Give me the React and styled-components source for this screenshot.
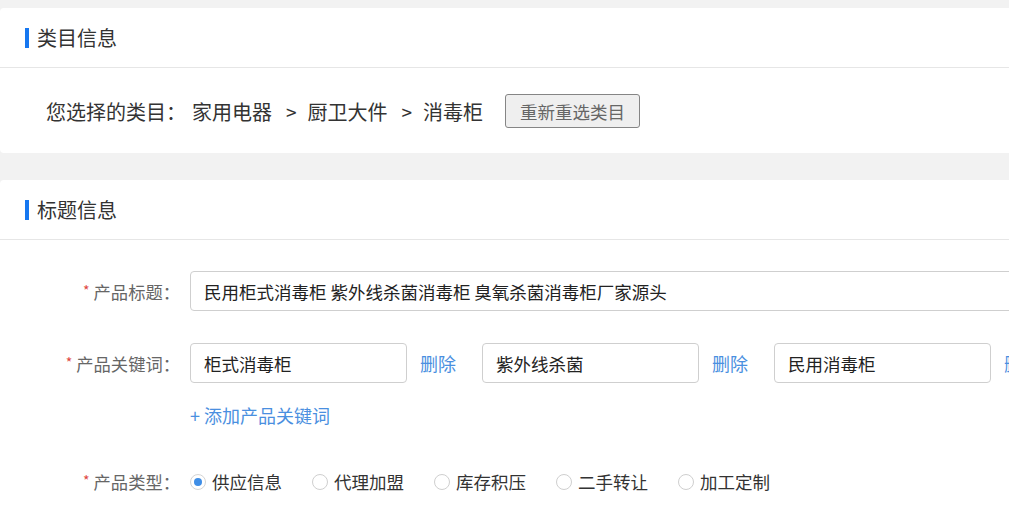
import React, { useState } from "react";
import styled, { createGlobalStyle } from "styled-components";

const GlobalStyle = createGlobalStyle`
  html, body {
    margin: 0;
    padding: 0;
    background: #f2f2f2;
    overflow: hidden;
  }
  body {
    font-family: "Noto Sans CJK SC", "Noto Sans", sans-serif;
    color: #333;
    text-spacing-trim: space-all;
  }
`;

const Page = styled.div`
  width: 1100px;
  padding-top: 8px;
`;

const Card = styled.section`
  background: #fff;
  border-radius: 4px;
  margin-bottom: 27px;
  padding-bottom: ${({ pb }) => pb || 0}px;
`;

const CardHeader = styled.div`
  height: 59px;
  border-bottom: 1px solid #e6e6e6;
  display: flex;
  align-items: center;
  padding-left: 25px;
`;

const Bar = styled.span`
  width: 4px;
  height: 20px;
  background: #1677f0;
  margin-right: 8px;
`;

const Title = styled.h2`
  margin: 0;
  font-size: 20px;
  font-weight: 400;
  color: #333;
  line-height: 1;
`;

const CategoryBody = styled.div`
  display: flex;
  align-items: center;
  padding: 26px 0 25px 46px;
  font-size: 20px;
  color: #333;
`;

const Crumb = styled.span`
  white-space: nowrap;
  margin-right: ${({ mr }) => mr || 0}px;
`;

const Sep = styled.span`
  margin: 0 11px 0 14px;
  font-size: 19px;
`;

const ResetButton = styled.button`
  margin-left: 22px;
  height: 34px;
  width: 135px;
  padding: 0;
  font-family: inherit;
  font-size: 17.5px;
  color: #666;
  background: #efefef;
  border: 1px solid #858585;
  border-radius: 3px;
`;

const FormBody = styled.div`
  padding-top: 31px;
`;

const Row = styled.div`
  display: flex;
  align-items: center;
  margin-bottom: ${({ gap }) => gap}px;
  min-height: ${({ h }) => h || 24}px;
`;

const Label = styled.label`
  width: 180px;
  padding-right: 10px;
  text-align: right;
  font-size: 17.3px;
  color: #666;
  white-space: nowrap;
  flex-shrink: 0;
`;

const Star = styled.span`
  color: #e0473f;
  font-size: 14px;
  margin-right: 4px;
  vertical-align: 3px;
`;

const TextInput = styled.input`
  box-sizing: border-box;
  width: ${({ w }) => w}px;
  height: 40px;
  border: 1px solid #cfcfcf;
  border-radius: 4px;
  padding: 0 13px;
  font-family: inherit;
  font-size: 17.5px;
  color: #222;
  outline: none;
  flex-shrink: 0;
`;

const LinkText = styled.a`
  color: #4a8fe0;
  font-size: 18px;
  cursor: pointer;
  white-space: nowrap;
  margin: ${({ m }) => m || "0"};
`;

const RadioGroup = styled.div`
  display: flex;
  align-items: center;
`;

const RadioItem = styled.label`
  display: flex;
  align-items: center;
  margin-right: 30px;
  font-size: 17.5px;
  color: #333;
  cursor: pointer;
`;

const Circle = styled.span`
  box-sizing: border-box;
  width: 16px;
  height: 16px;
  border-radius: 50%;
  border: 1px solid ${({ on }) => (on ? "#d4d4d4" : "#cfcfcf")};
  background: #fff;
  margin-right: 6px;
  display: flex;
  align-items: center;
  justify-content: center;

  &::after {
    content: "";
    width: 8px;
    height: 8px;
    border-radius: 50%;
    background: ${({ on }) => (on ? "#3f8ee6" : "transparent")};
  }
`;

const types = ["供应信息", "代理加盟", "库存积压", "二手转让", "加工定制"];
const keywords = ["柜式消毒柜", "紫外线杀菌", "民用消毒柜"];

const App = () => {
  const [type, setType] = useState(0);

  return (
    <Page>
      <GlobalStyle />
      <Card>
        <CardHeader>
          <Bar />
          <Title>类目信息</Title>
        </CardHeader>
        <CategoryBody>
          <Crumb mr={6}>您选择的类目：</Crumb>
          <Crumb>家用电器</Crumb>
          <Sep>&gt;</Sep>
          <Crumb>厨卫大件</Crumb>
          <Sep>&gt;</Sep>
          <Crumb>消毒柜</Crumb>
          <ResetButton>重新重选类目</ResetButton>
        </CategoryBody>
      </Card>

      <Card pb={60}>
        <CardHeader>
          <Bar />
          <Title>标题信息</Title>
        </CardHeader>
        <FormBody>
          <Row gap={32} h={40}>
            <Label>
              <Star>*</Star>产品标题：
            </Label>
            <TextInput
              w={900}
              defaultValue="民用柜式消毒柜 紫外线杀菌消毒柜 臭氧杀菌消毒柜厂家源头"
            />
          </Row>
          <Row gap={19} h={40}>
            <Label>
              <Star>*</Star>产品关键词：
            </Label>
            {keywords.map((k) => (
              <React.Fragment key={k}>
                <TextInput w={217} defaultValue={k} />
                <LinkText m="0 26px 0 13px">删除</LinkText>
              </React.Fragment>
            ))}
          </Row>
          <Row gap={41} h={24}>
            <Label />
            <LinkText>+ 添加产品关键词</LinkText>
          </Row>
          <Row gap={30} h={24}>
            <Label>
              <Star>*</Star>产品类型：
            </Label>
            <RadioGroup>
              {types.map((t, i) => (
                <RadioItem key={t} onClick={() => setType(i)}>
                  <Circle on={type === i} />
                  {t}
                </RadioItem>
              ))}
            </RadioGroup>
          </Row>
        </FormBody>
      </Card>
    </Page>
  );
};

export default App;
